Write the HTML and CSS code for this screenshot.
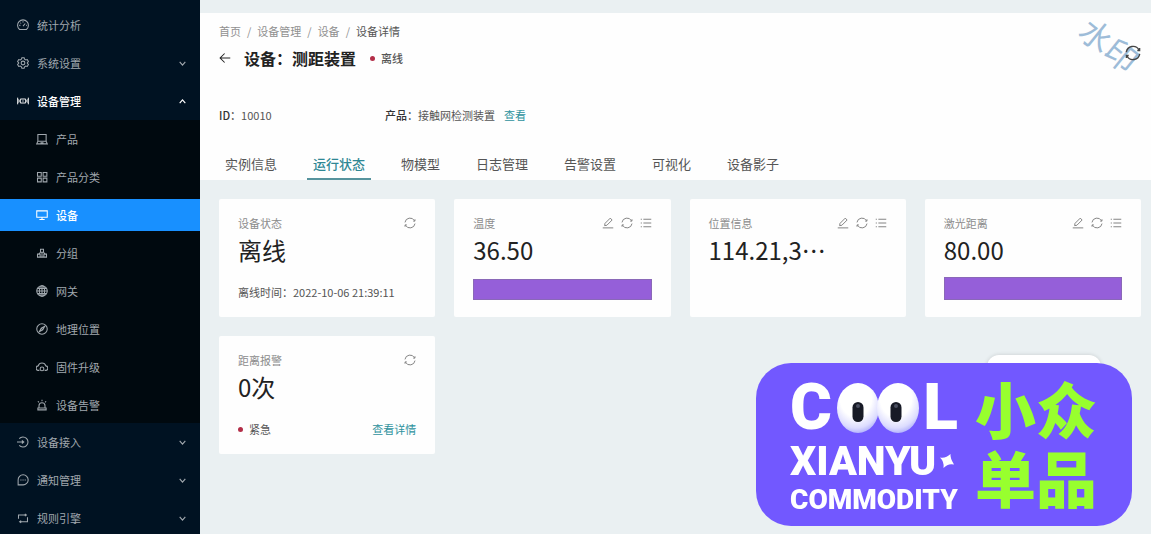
FILE: index.html
```
<!DOCTYPE html>
<html lang="zh-CN">
<head>
  <meta charset="UTF-8">
  <meta name="viewport" content="width=device-width, initial-scale=1.0">
  <title>设备详情</title>
  <link rel="stylesheet" href="styles.css">
</head>
<body>
  <!-- Shared icons -->
  <svg class="sprite" aria-hidden="true">
    <symbol id="i-dashboard" viewBox="0 0 16 16"><path d="M3.500 14a7.200 7.200 0 1 1 9 0zM8 9.500l3-3.500M8 3v1.500M3 8.500h1.500M12 8.500h1M4.500 5l1 1"/></symbol>
    <symbol id="i-setting" viewBox="0 0 16 16"><path d="M6.500 1h3l.6 2 1.600.9 2-.5 1.500 2.600L13.800 7.500v1l1.400 1.500-1.500 2.600-2-.5-1.600.9-.6 2h-3l-.6-2-1.600-.9-2 .5L.8 10l1.400-1.500v-1L.8 6l1.500-2.600 2 .5L5.900 3z"/><circle cx="8" cy="8" r="2.500"/></symbol>
    <symbol id="i-control" viewBox="0 0 18 16"><path d="M1 3v10M17 3v10M1 5.500l3 2.500-3 2.500M17 5.500L14 8l3 2.500M5 5h8v6H5zM8 8h2"/></symbol>
    <symbol id="i-laptop" viewBox="0 0 16 16"><path d="M2.500 2h11v9h-11zM2.500 11L1 14.500h14L13.500 11M6 13h4"/></symbol>
    <symbol id="i-grid" viewBox="0 0 16 16"><path d="M2 2h5v5H2zM9.500 2h5v5h-5zM2 9.500h5v5H2zM9.500 9.500h5v5h-5z"/></symbol>
    <symbol id="i-desktop" viewBox="0 0 16 16"><path d="M1 2.500h14v8.500H1zM8 11v3M4.500 14h7"/></symbol>
    <symbol id="i-group" viewBox="0 0 16 16"><path d="M6 3h4v4H6zM2 9.500h3.500v4H2zM10.500 9.500H14v4h-3.500zM8 7v6.500M3.500 9.500L6 7M12.500 9.500L10 7M5.500 13.500h5"/></symbol>
    <symbol id="i-globe" viewBox="0 0 16 16"><circle cx="8" cy="8" r="7"/><ellipse cx="8" cy="8" rx="3.500" ry="7"/><path d="M1 8h14M2 4.500h12M2 11.500h12M8 1v14"/></symbol>
    <symbol id="i-compass" viewBox="0 0 16 16"><circle cx="8" cy="8" r="7"/><path d="M11.500 4.500L9 9l-4.500 2.500L7 7zM7 7l2 2"/></symbol>
    <symbol id="i-cloud" viewBox="0 0 16 16"><path d="M4.500 12.500h-1a3 3 0 0 1-.5-6 5.200 5.200 0 0 1 10 0 3 3 0 0 1-.5 6h-1"/><circle cx="8" cy="10.500" r="2.500"/></symbol>
    <symbol id="i-alert" viewBox="0 0 16 16"><path d="M4 12V9a4 4 0 0 1 8 0v3M2.500 12h11v2.500h-11zM8 1v2M2.500 3L4 4.500M13.500 3L12 4.500"/></symbol>
    <symbol id="i-login" viewBox="0 0 16 16"><path d="M3 3.500a6.700 6.700 0 1 1 0 9M0 8h8.500M6.500 6l2.500 2-2.500 2"/></symbol>
    <symbol id="i-message" viewBox="0 0 16 16"><path d="M1.500 14.500V8A6.700 6.700 0 1 1 8 14.500zM4.500 8H6M7.300 8h1.500M10.200 8h1.500"/></symbol>
    <symbol id="i-retweet" viewBox="0 0 16 16"><path d="M2 9V4h10M14 7v6H4M10.500 2.500L12.500 4l-2 1.500M5.500 11.500L3.500 13l2 1.500"/></symbol>
    <symbol id="i-down" viewBox="0 0 16 16"><path d="M3 5l5 6 5-6"/></symbol>
    <symbol id="i-up" viewBox="0 0 16 16"><path d="M3 11l5-6 5 6"/></symbol>
    <symbol id="i-back" viewBox="0 0 16 16"><path d="M15 8H2M7.500 2L1.500 8l6 6"/></symbol>
    <symbol id="i-sync" viewBox="0 0 16 16"><path d="M1.300 7.200A6.800 6.800 0 0 1 14 5M14.700 8.800A6.800 6.800 0 0 1 2 11M14.600 3v2.500h-2.300M1.400 13v-2.500h2.300"/></symbol>
    <symbol id="i-edit" viewBox="0 0 16 16"><path d="M1 14.500h14M3.500 11.500l.5-3L11 1.500l2.500 2.500-7 7z"/></symbol>
    <symbol id="i-list" viewBox="0 0 16 16"><path d="M4.500 3H15M4.500 8H15M4.500 13H15M1 3h1.500M1 8h1.500M1 13h1.500"/></symbol>
  </svg>

  <div class="layout">
    <nav class="sidebar">
      <a class="menu-item" href="#"><svg class="icon"><use href="#i-dashboard"/></svg><span>统计分析</span></a>
      <button class="menu-item"><svg class="icon"><use href="#i-setting"/></svg><span>系统设置</span><svg class="arrow"><use href="#i-down"/></svg></button>
      <button class="menu-item open"><svg class="icon"><use href="#i-control"/></svg><span>设备管理</span><svg class="arrow"><use href="#i-up"/></svg></button>
      <div class="submenu">
        <a class="menu-item" href="#"><svg class="icon"><use href="#i-laptop"/></svg><span>产品</span></a>
        <a class="menu-item" href="#"><svg class="icon"><use href="#i-grid"/></svg><span>产品分类</span></a>
        <a class="menu-item active" href="#"><svg class="icon"><use href="#i-desktop"/></svg><span>设备</span></a>
        <a class="menu-item" href="#"><svg class="icon"><use href="#i-group"/></svg><span>分组</span></a>
        <a class="menu-item" href="#"><svg class="icon"><use href="#i-globe"/></svg><span>网关</span></a>
        <a class="menu-item" href="#"><svg class="icon"><use href="#i-compass"/></svg><span>地理位置</span></a>
        <a class="menu-item" href="#"><svg class="icon"><use href="#i-cloud"/></svg><span>固件升级</span></a>
        <a class="menu-item" href="#"><svg class="icon"><use href="#i-alert"/></svg><span>设备告警</span></a>
      </div>
      <button class="menu-item"><svg class="icon"><use href="#i-login"/></svg><span>设备接入</span><svg class="arrow"><use href="#i-down"/></svg></button>
      <button class="menu-item"><svg class="icon"><use href="#i-message"/></svg><span>通知管理</span><svg class="arrow"><use href="#i-down"/></svg></button>
      <button class="menu-item"><svg class="icon"><use href="#i-retweet"/></svg><span>规则引擎</span><svg class="arrow"><use href="#i-down"/></svg></button>
    </nav>

    <main class="main">
      <header class="page-header">
        <div class="breadcrumb">
          <a href="#">首页</a><i>/</i><a href="#">设备管理</a><i>/</i><a href="#">设备</a><i>/</i><span>设备详情</span>
        </div>
        <div class="heading">
          <button class="icon-btn back" aria-label="返回"><svg class="icon"><use href="#i-back"/></svg></button>
          <h1>设备：测距装置</h1>
          <span class="status"><b class="dot"></b>离线</span>
        </div>
        <div class="info">
          <div><strong>ID：</strong>10010</div>
          <div><strong>产品：</strong>接触网检测装置<a class="link" href="#">查看</a></div>
        </div>
        <div class="tabs">
          <button class="tab">实例信息</button>
          <button class="tab selected">运行状态</button>
          <button class="tab">物模型</button>
          <button class="tab">日志管理</button>
          <button class="tab">告警设置</button>
          <button class="tab">可视化</button>
          <button class="tab">设备影子</button>
        </div>
        <div class="watermark">水印</div>
        <button class="icon-btn reload" aria-label="刷新"><svg class="icon"><use href="#i-sync"/></svg></button>
      </header>

      <section class="cards">
        <article class="card">
          <div class="card-head">
            <span>设备状态</span>
            <div class="actions"><button class="icon-btn" aria-label="刷新"><svg class="icon"><use href="#i-sync"/></svg></button></div>
          </div>
          <div class="value">离线</div>
          <div class="card-foot">离线时间：2022-10-06 21:39:11</div>
        </article>

        <article class="card">
          <div class="card-head">
            <span>温度</span>
            <div class="actions">
              <button class="icon-btn" aria-label="编辑"><svg class="icon"><use href="#i-edit"/></svg></button>
              <button class="icon-btn" aria-label="刷新"><svg class="icon"><use href="#i-sync"/></svg></button>
              <button class="icon-btn" aria-label="详情"><svg class="icon"><use href="#i-list"/></svg></button>
            </div>
          </div>
          <div class="value">36.50</div>
          <div class="chart"></div>
        </article>

        <article class="card">
          <div class="card-head">
            <span>位置信息</span>
            <div class="actions">
              <button class="icon-btn" aria-label="编辑"><svg class="icon"><use href="#i-edit"/></svg></button>
              <button class="icon-btn" aria-label="刷新"><svg class="icon"><use href="#i-sync"/></svg></button>
              <button class="icon-btn" aria-label="详情"><svg class="icon"><use href="#i-list"/></svg></button>
            </div>
          </div>
          <div class="value">114.21,3⋯</div>
        </article>

        <article class="card">
          <div class="card-head">
            <span>激光距离</span>
            <div class="actions">
              <button class="icon-btn" aria-label="编辑"><svg class="icon"><use href="#i-edit"/></svg></button>
              <button class="icon-btn" aria-label="刷新"><svg class="icon"><use href="#i-sync"/></svg></button>
              <button class="icon-btn" aria-label="详情"><svg class="icon"><use href="#i-list"/></svg></button>
            </div>
          </div>
          <div class="value">80.00</div>
          <div class="chart tall"></div>
        </article>

        <article class="card">
          <div class="card-head">
            <span>距离报警</span>
            <div class="actions"><button class="icon-btn" aria-label="刷新"><svg class="icon"><use href="#i-sync"/></svg></button></div>
          </div>
          <div class="value">0次</div>
          <div class="card-foot"><span class="level"><b class="dot"></b>紧急</span><a class="link" href="#">查看详情</a></div>
        </article>
      </section>
    </main>
  </div>

  <div class="popup"></div>
  <aside class="banner">
    <div class="banner-en">
      <div class="cool">
        <span>C</span>
        <svg class="eyes" viewBox="0 0 82 52">
          <defs>
            <radialGradient id="eye" cx="0.45" cy="0.3" r="0.75">
              <stop offset="0.5" stop-color="#fff"/>
              <stop offset="0.8" stop-color="#dcdcff"/>
              <stop offset="1" stop-color="#a3a2fb"/>
            </radialGradient>
          </defs>
          <ellipse cx="21" cy="26" rx="21" ry="25" fill="url(#eye)"/>
          <ellipse cx="61" cy="26" rx="21" ry="25" fill="url(#eye)"/>
          <rect x="15.500" y="20" width="11" height="20" rx="5.500" fill="#171a26"/>
          <rect x="53.500" y="20" width="11" height="20" rx="5.500" fill="#171a26"/>
          <circle cx="21" cy="24" r="2" fill="#4a4e60"/>
          <circle cx="59" cy="24" r="2" fill="#4a4e60"/>
        </svg>
        <span>L</span>
      </div>
      <div class="xianyu">
        <span>XIANYU</span>
        <svg class="spark" viewBox="0 0 14 14"><path d="M10.500 0Q10 4 14 10.500Q8 9 3.500 14Q4.500 8 0 3.500Q6 4.500 10.500 0z"/></svg>
      </div>
      <div class="commodity">COMMODITY</div>
    </div>
    <div class="banner-cn">小众<br>单品</div>
  </aside>
</body>
</html>
```
FILE: styles.css
```
* {
  box-sizing: border-box;
}

body {
  margin: 0;
  font-family: "Noto Sans CJK SC", sans-serif;
  font-size: 11px;
  line-height: 16px;
  color: #555;
  background-color: #eaf0f2;
  overflow: hidden;
}

a {
  color: inherit;
  text-decoration: none;
}

button {
  font: inherit;
  color: inherit;
  background: none;
  border: none;
  padding: 0;
  cursor: pointer;
}

.sprite {
  display: none;
}

.icon,
.arrow {
  width: 12px;
  height: 12px;
  fill: none;
  stroke: currentColor;
  stroke-width: 1.4;
  flex-shrink: 0;
}

.layout {
  display: flex;
  height: 100vh;
}

/* Sidebar */
.sidebar {
  width: 200px;
  flex-shrink: 0;
  padding-top: 6px;
  background-color: #001222;
  overflow: hidden;
}

.menu-item {
  display: flex;
  align-items: center;
  gap: 8px;
  width: 100%;
  height: 32px;
  margin: 3px 0;
  padding: 0 13px 0 17px;
  color: #a0a8ae;
}

.sidebar > .menu-item {
  margin: 0;
  height: 38px;
}

.sidebar > .menu-item.open {
  color: #fff;
  font-weight: 500;
}

.menu-item .arrow {
  width: 9px;
  height: 9px;
  margin-left: auto;
  stroke-width: 2;
}

.submenu {
  display: flow-root;
  background-color: #00090f;
}

.submenu .menu-item {
  padding-left: 36px;
  margin: 6px 0;
}

.submenu .menu-item:first-child {
  margin-top: 3px;
}

.submenu .menu-item:last-child {
  margin-bottom: 2px;
}

.submenu .menu-item.active {
  color: #fff;
  font-weight: 500;
  background-color: #1890ff;
}

/* Page header */
.main {
  flex: 1;
  min-width: 0;
  padding-top: 13px;
}

.page-header {
  position: relative;
  padding: 10px 19px 0;
  background-color: #fefefe;
}

.breadcrumb {
  display: flex;
  color: #909090;
}

.breadcrumb i {
  margin: 0 6px;
  font-style: normal;
}

.breadcrumb span {
  color: #555;
}

.heading {
  display: flex;
  align-items: center;
  height: 24px;
  margin-top: 7px;
}

.heading h1 {
  margin: 0 14px 0 13px;
  font-size: 16px;
  line-height: 24px;
  font-weight: 700;
  color: #222;
}

.icon-btn {
  display: flex;
  color: #777;
}

.back {
  color: #222;
}

.status,
.level {
  display: flex;
  align-items: center;
}

.status {
  font-weight: 500;
}

.dot {
  width: 5px;
  height: 5px;
  margin-right: 6px;
  border-radius: 50%;
  background-color: #b32e48;
}

.info {
  display: grid;
  grid-template-columns: 166px 1fr;
  margin-top: 37px;
}

.info strong {
  font-weight: 500;
  color: #333;
}

.link {
  color: #2f929d;
}

.info .link {
  margin-left: 9px;
}

.tabs {
  display: flex;
  gap: 24px;
  margin-top: 26px;
}

.tab {
  padding: 5px 6px 4px;
  font-size: 13px;
  line-height: 20px;
  border-bottom: 2px solid transparent;
}

.tab.selected {
  font-weight: 500;
  color: #2f8794;
  border-color: #56939d;
}

.watermark {
  position: absolute;
  top: 15px;
  right: 9px;
  font-size: 32px;
  line-height: 32px;
  color: #9dbcd8;
  transform: rotate(39deg);
}

.reload {
  position: absolute;
  top: 32px;
  right: 10px;
  color: #444;
}

.reload .icon {
  width: 16px;
  height: 16px;
}

/* Status cards */
.cards {
  display: grid;
  grid-template-columns: repeat(4, 1fr);
  gap: 19px;
  padding: 19px 10px 19px 19px;
}

.card {
  display: flex;
  flex-direction: column;
  min-height: 118px;
  padding: 15px 19px 17px;
  background-color: #fefefe;
  border-radius: 2px;
}

.card-head {
  display: flex;
  align-items: center;
  justify-content: space-between;
  height: 18px;
  color: #8c8c8c;
}

.actions {
  display: flex;
  gap: 7px;
}

.actions .icon {
  stroke-width: 1.2;
}

.value {
  font-size: 24px;
  line-height: 36px;
  color: #222;
}

.card-foot {
  display: flex;
  justify-content: space-between;
  margin-top: auto;
}

.chart {
  height: 21px;
  margin-top: auto;
  background-color: #955fd9;
  border: 1px solid #8a68b8;
}

.chart.tall {
  height: 23px;
}

/* Promo banner floating over the page */
.popup {
  position: fixed;
  right: 50px;
  bottom: 150px;
  width: 114px;
  height: 29px;
  border-radius: 12px;
  background-color: #fff;
  box-shadow: 0 0 4px rgba(0, 0, 0, 0.15);
}

.banner {
  position: fixed;
  right: 19px;
  bottom: 8px;
  display: flex;
  gap: 17px;
  width: 376px;
  height: 163px;
  padding: 10px 34px;
  border-radius: 35px;
  background-color: #7258ff;
  color: #fff;
}

.banner-en {
  width: 168px;
  padding-top: 6px;
  font-family: Roboto, sans-serif;
  font-weight: 900;
}

.cool {
  display: flex;
  align-items: center;
  justify-content: space-between;
  height: 58px;
  font-size: 64px;
  line-height: 58px;
}

.eyes {
  width: 84px;
  height: 52px;
  flex-shrink: 0;
}

.xianyu {
  display: flex;
  align-items: center;
  gap: 4px;
  height: 48px;
  font-size: 41px;
  line-height: 48px;
}

.spark {
  width: 14px;
  height: 14px;
  fill: #fff;
}

.commodity {
  font-size: 28px;
  line-height: 30px;
}

.banner-cn {
  font-size: 61px;
  line-height: 69px;
  font-weight: 900;
  color: #98ff2e;
}
```
